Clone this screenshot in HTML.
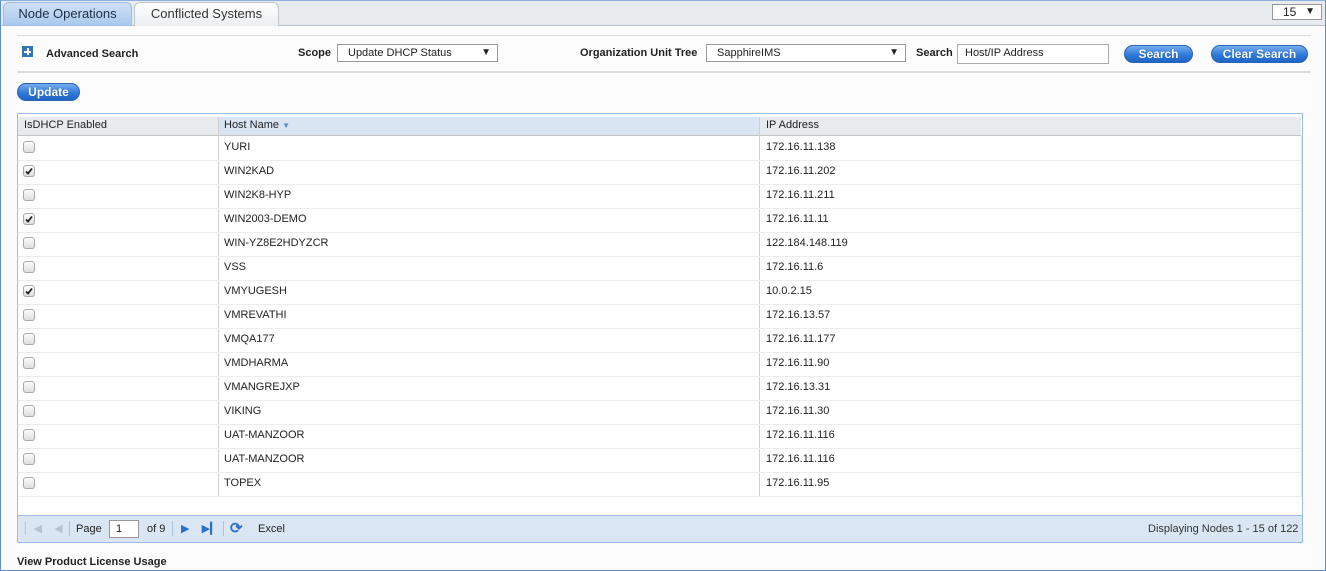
<!DOCTYPE html>
<html><head><style>
*{margin:0;padding:0;box-sizing:border-box}
body{width:1326px;height:571px;overflow:hidden;background:#fff;font-family:"Liberation Sans",Arial,sans-serif;font-size:11px;color:#222;position:relative}
.a{position:absolute}
.frame{left:0;top:0;width:1326px;height:571px;border:1px solid #5b8fd0;border-top-color:#8cb0de;background:#fcfcfd}
.tabbar{left:1px;top:1px;width:1324px;height:25px;background:#e8ebee;border-bottom:1px solid #b9c3cd}
.tab{top:2px;height:24px;border-radius:6px 6px 0 0;font-size:13px;line-height:22px;text-align:center}
.b{font-weight:bold;font-size:11px;color:#222}
.sel{height:18px;border:1px solid #999;background:#fff;font-size:11px;line-height:16px;padding-left:10px}
.sel span{position:absolute;right:6px;top:0;font-size:10px}
.btn{height:18px;border-radius:9px;background:linear-gradient(#76aef0,#2f7ad9 55%,#1f64c6);border:1px solid #2a63b4;color:#fff;font-weight:bold;font-size:12px;line-height:16px;text-align:center;text-shadow:0 0 1px #1a4a90}
.hr{height:2px;background:#dcdcdc}
.row{left:18px;width:1283px;height:24px;border-bottom:1px solid #ececec;font-size:11px}
.row .c{position:absolute;left:5px;top:4px;width:12px;height:12px;border:1px solid #a9a9a9;border-radius:3px;background:linear-gradient(#fdfdfd,#dcdcdc)}
.row .h{position:absolute;left:206px;top:4px}
.row .i{position:absolute;left:748px;top:4px}
.vl{width:1px;background:#e2e2e2}
</style></head><body>
<svg width="0" height="0" style="position:absolute"><defs><symbol id="ck" viewBox="0 0 10 10"><path d="M2 5.5 L4 7.5 L8 2.5" stroke="#222" stroke-width="1.8" fill="none"/></symbol></defs></svg>
<div class="a frame"></div>
<div class="a tabbar"></div>
<div class="a tab" style="left:3px;width:129px;background:linear-gradient(#cfe0f5,#a9c9ee);border:1px solid #9fbde2;color:#1e2f45">Node Operations</div>
<div class="a tab" style="left:134px;width:145px;background:linear-gradient(#fff,#eceef0);border:1px solid #bcc4cc;border-bottom:none;color:#333">Conflicted Systems</div>
<div class="a sel" style="left:1272px;top:4px;width:50px;height:16px;line-height:14px;font-size:12px">15<span style="font-size:10px">▼</span></div>

<div class="a hr" style="left:17px;top:35px;width:1294px;height:1px"></div>
<div class="a" style="left:22px;top:46px;width:11px;height:11px;background:#3674b8"><div class="a" style="left:4.5px;top:2px;width:2px;height:7px;background:#fff"></div><div class="a" style="left:2px;top:4.5px;width:7px;height:2px;background:#fff"></div></div>
<div class="a b" style="left:46px;top:48px">Advanced Search</div>
<div class="a b" style="left:298px;top:47px">Scope</div>
<div class="a sel" style="left:337px;top:44px;width:161px">Update DHCP Status<span>▼</span></div>
<div class="a b" style="left:580px;top:47px">Organization Unit Tree</div>
<div class="a sel" style="left:706px;top:44px;width:200px">SapphireIMS<span>▼</span></div>
<div class="a b" style="left:916px;top:47px">Search</div>
<div class="a sel" style="left:957px;top:44px;width:152px;height:20px;border-color:#aaa;padding-left:7px;line-height:17px">Host/IP Address</div>
<div class="a btn" style="left:1124px;top:45px;width:69px">Search</div>
<div class="a btn" style="left:1211px;top:45px;width:97px">Clear Search</div>
<div class="a hr" style="left:17px;top:71px;width:1294px"></div>
<div class="a btn" style="left:17px;top:83px;width:63px">Update</div>

<div class="a" style="left:17px;top:113px;width:1286px;height:430px;border:1px solid #99bce8;background:#fff"></div>
<div class="a" style="left:18px;top:117px;width:1283px;height:19px;background:#e8ebee;border-bottom:1px solid #c5c5c5"></div>
<div class="a" style="left:218px;top:117px;width:542px;height:19px;background:#d9e5f3;border-bottom:1px solid #c5c5c5"></div>
<div class="a vl" style="left:218px;top:117px;height:380px;background:#d0d0d0"></div>
<div class="a vl" style="left:759px;top:117px;height:380px;background:#d0d0d0"></div>
<div class="a vl" style="left:1301px;top:136px;height:361px"></div>
<div class="a" style="left:24px;top:119px">IsDHCP Enabled</div>
<div class="a" style="left:224px;top:119px">Host Name <span style="color:#5b8fd0;font-size:8px">▼</span></div>
<div class="a" style="left:766px;top:119px">IP Address</div>

<div class="a row" style="top:137px"><div class="c"></div><div class="h">YURI</div><div class="i">172.16.11.138</div></div>
<div class="a row" style="top:161px"><div class="c"><svg width="10" height="10"><use href="#ck"/></svg></div><div class="h">WIN2KAD</div><div class="i">172.16.11.202</div></div>
<div class="a row" style="top:185px"><div class="c"></div><div class="h">WIN2K8-HYP</div><div class="i">172.16.11.211</div></div>
<div class="a row" style="top:209px"><div class="c"><svg width="10" height="10"><use href="#ck"/></svg></div><div class="h">WIN2003-DEMO</div><div class="i">172.16.11.11</div></div>
<div class="a row" style="top:233px"><div class="c"></div><div class="h">WIN-YZ8E2HDYZCR</div><div class="i">122.184.148.119</div></div>
<div class="a row" style="top:257px"><div class="c"></div><div class="h">VSS</div><div class="i">172.16.11.6</div></div>
<div class="a row" style="top:281px"><div class="c"><svg width="10" height="10"><use href="#ck"/></svg></div><div class="h">VMYUGESH</div><div class="i">10.0.2.15</div></div>
<div class="a row" style="top:305px"><div class="c"></div><div class="h">VMREVATHI</div><div class="i">172.16.13.57</div></div>
<div class="a row" style="top:329px"><div class="c"></div><div class="h">VMQA177</div><div class="i">172.16.11.177</div></div>
<div class="a row" style="top:353px"><div class="c"></div><div class="h">VMDHARMA</div><div class="i">172.16.11.90</div></div>
<div class="a row" style="top:377px"><div class="c"></div><div class="h">VMANGREJXP</div><div class="i">172.16.13.31</div></div>
<div class="a row" style="top:401px"><div class="c"></div><div class="h">VIKING</div><div class="i">172.16.11.30</div></div>
<div class="a row" style="top:425px"><div class="c"></div><div class="h">UAT-MANZOOR</div><div class="i">172.16.11.116</div></div>
<div class="a row" style="top:449px"><div class="c"></div><div class="h">UAT-MANZOOR</div><div class="i">172.16.11.116</div></div>
<div class="a row" style="top:473px"><div class="c"></div><div class="h">TOPEX</div><div class="i">172.16.11.95</div></div>

<div class="a" style="left:18px;top:515px;width:1284px;height:27px;background:#dae6f4;border-top:1px solid #99bce8"></div>
<div class="a" style="left:25px;top:522px;color:#b9c3cd;font-size:11px">▏◀&nbsp;&nbsp;&nbsp;&nbsp;◀</div>
<div class="a" style="left:69px;top:521px;width:1px;height:15px;background:#aac4e0"></div>
<div class="a" style="left:76px;top:523px">Page</div>
<div class="a" style="left:109px;top:520px;width:30px;height:18px;border:1px solid #999;background:#fff;padding:2px 6px">1</div>
<div class="a" style="left:147px;top:523px">of 9</div>
<div class="a" style="left:172px;top:521px;width:1px;height:15px;background:#aac4e0"></div>
<div class="a" style="left:181px;top:522px;color:#2a6fc9;font-size:11px">▶&nbsp;&nbsp;&nbsp;&nbsp;▶▎</div>
<div class="a" style="left:223px;top:521px;width:1px;height:15px;background:#aac4e0"></div>
<div class="a" style="left:230px;top:519px;color:#2a6fc9;font-size:15px;font-weight:bold">⟳</div>
<div class="a" style="left:258px;top:523px">Excel</div>
<div class="a" style="left:1148px;top:523px;color:#333">Displaying Nodes 1 - 15 of 122</div>
<div class="a b" style="left:17px;top:556px">View Product License Usage</div>
</body></html>
